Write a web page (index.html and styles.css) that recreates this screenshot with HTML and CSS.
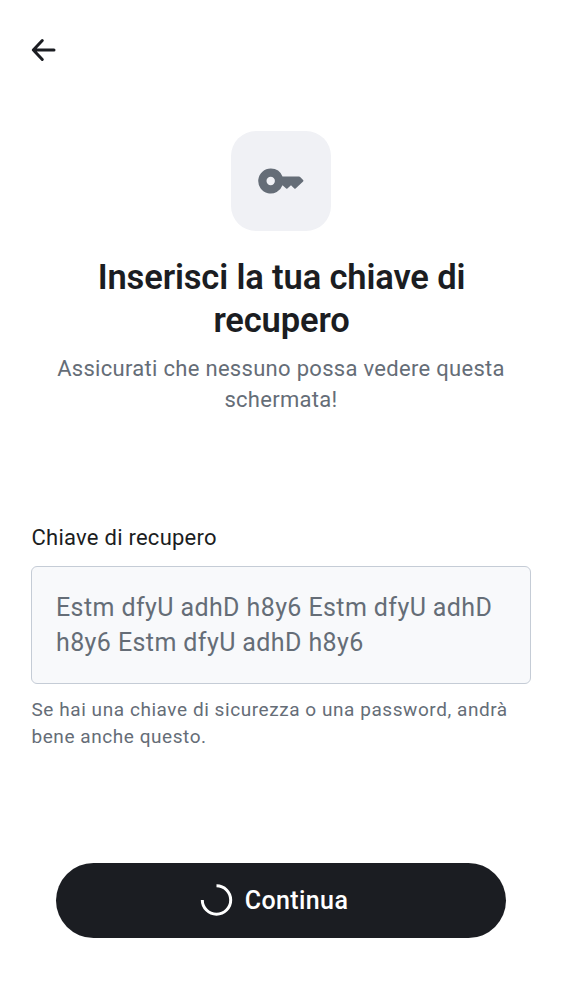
FILE: index.html
```html
<!DOCTYPE html>
<html lang="it">
<head>
<meta charset="utf-8">
<title>Chiave di recupero</title>
<link rel="stylesheet" href="styles.css">
</head>
<body>
<main class="screen">
  <header class="topbar">
    <svg class="back" viewBox="0 0 26 24"><path d="M11.300 2.500 2.300 12 11.300 21.500M2.500 12H23" /></svg>
  </header>
  <section class="hero">
    <div class="tile">
      <svg class="key" viewBox="0 0 46 26"><path fill-rule="evenodd" d="M12.700.5a12.500 12.500 0 1 0 11.800 16.700l3.700 3.300q.6.500 1.200 0L33 17.300l3.300 3.200q.6.600 1.300 0l7.500-7q.6-.7 0-1.400l-3-3.100q-.4-.4-1-.4H24.500A12.500 12.500 0 0 0 12.700.5Zm0 8.300a4.200 4.200 0 1 1 0 8.400 4.200 4.200 0 0 1 0-8.400Z"/></svg>
    </div>
    <h1 class="title">Inserisci la tua chiave di<br>recupero</h1>
    <p class="subtitle">Assicurati che nessuno possa vedere questa<br>schermata!</p>
  </section>
  <section class="field">
    <label class="label">Chiave di recupero</label>
    <div class="input">Estm dfyU adhD h8y6 Estm dfyU adhD<br>h8y6 Estm dfyU adhD h8y6</div>
    <p class="hint">Se hai una chiave di sicurezza o una password, andrà<br>bene anche questo.</p>
  </section>
  <footer class="footer">
    <button class="button"><svg class="spinner" viewBox="0 0 32 32"><path d="M15.500 1.800a14.200 14.200 0 1 1-14.200 14.200"/></svg><span class="caption">Continua</span></button>
  </footer>
</main>
</body>
</html>
```
FILE: styles.css
```css
* { box-sizing: border-box; }
body { margin: 0; background: #fff; font-family: Roboto, sans-serif; color: #1b1d22; }
h1, p { margin: 0; }
.screen { height: 1000px; display: flex; flex-direction: column; padding: 38px 31px 62.500px; }
.topbar { height: 93px; }
.back { display: block; width: 26px; height: 24px; fill: none; stroke: #1b1d22; stroke-width: 3; stroke-linecap: round; stroke-linejoin: round; }
.hero { display: flex; flex-direction: column; align-items: center; text-align: center; white-space: nowrap; }
.tile { width: 100px; height: 100px; border-radius: 25px; background: #f0f1f5; display: flex; align-items: center; justify-content: center; }
.key { width: 46px; height: 26px; fill: #656d77; }
.title { margin-top: 25px; padding-left: 1px; font-size: 34.500px; line-height: 43px; font-weight: 600; letter-spacing: -.14px; }
.subtitle { margin-top: 11px; font-size: 22px; line-height: 31px; letter-spacing: .3px; color: #656d77; }
.field { margin-top: 107px; white-space: nowrap; }
.label { display: block; padding-left: .5px; font-size: 22px; line-height: 31px; letter-spacing: .25px; }
.input { margin-top: 13px; height: 118px; border: 1px solid #c5ccd6; border-radius: 6px; background: #f8f9fb; padding: 24px; font-size: 25px; line-height: 34.500px; letter-spacing: .4px; color: #656d77; }
.hint { margin-top: 12px; padding-left: .5px; font-size: 19px; line-height: 27px; letter-spacing: .56px; color: #656d77; }
.footer { margin-top: auto; padding: 0 25px; }
.button { width: 100%; height: 75px; border: 0; border-radius: 38px; background: #1b1d22; color: #fff; display: flex; align-items: center; justify-content: center; gap: 12px; padding: 0 13px 0 0; font: 500 25px/34px Roboto, sans-serif; letter-spacing: .4px; }
.caption { padding-top: 1px; }
.spinner { width: 32px; height: 32px; fill: none; stroke: #fff; stroke-width: 3; overflow: visible; }
```
